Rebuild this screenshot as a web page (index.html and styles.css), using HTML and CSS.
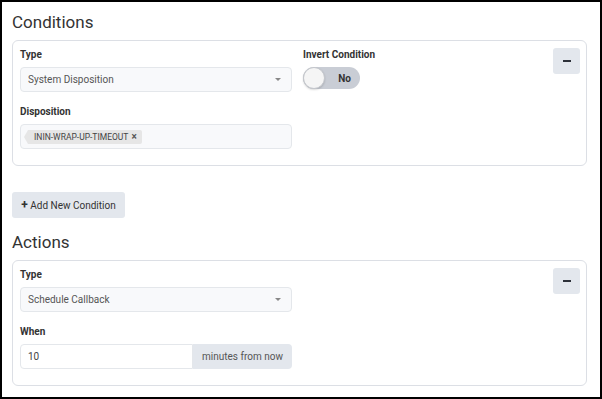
FILE: index.html
```html
<!DOCTYPE html>
<html lang="en">
<head>
    <meta charset="UTF-8">
    <meta name="viewport" content="width=device-width, initial-scale=1.0">
    <title>Conditions and Actions</title>
    <link rel="stylesheet" href="styles.css">
</head>
<body>
    <div class="frame">
        <h2 class="section-title">Conditions</h2>
        <div class="card">
            <div class="card-grid">
                <div class="col-main">
                    <div class="form-group">
                        <label class="field-label">Type</label>
                        <div class="select">
                            <span>System Disposition</span>
                            <span class="caret"></span>
                        </div>
                    </div>
                    <div class="form-group">
                        <label class="field-label">Disposition</label>
                        <div class="tag-input">
                            <span class="tag">ININ-WRAP-UP-TIMEOUT <b class="tag-x">&times;</b></span>
                        </div>
                    </div>
                </div>
                <div class="col-side">
                    <label class="field-label">Invert Condition</label>
                    <div class="toggle">
                        <span class="knob"></span>
                        <span class="toggle-text">No</span>
                    </div>
                </div>
                <button class="btn-remove"><span class="minus"></span></button>
            </div>
        </div>

        <button class="btn-add"><b>+</b> Add New Condition</button>

        <h2 class="section-title">Actions</h2>
        <div class="card">
            <div class="card-grid">
                <div class="col-main">
                    <div class="form-group">
                        <label class="field-label">Type</label>
                        <div class="select">
                            <span>Schedule Callback</span>
                            <span class="caret"></span>
                        </div>
                    </div>
                    <div class="form-group">
                        <label class="field-label">When</label>
                        <div class="input-group">
                            <div class="input">10</div>
                            <div class="addon">minutes from now</div>
                        </div>
                    </div>
                </div>
                <div class="col-side"></div>
                <button class="btn-remove"><span class="minus"></span></button>
            </div>
        </div>
    </div>
</body>
</html>
```
FILE: styles.css
```css
body {
    margin: 0;
    font-family: Roboto, "Liberation Sans", sans-serif;
    color: #333;
    background: #fff;
}
.frame {
    box-sizing: border-box;
    width: 602px;
    height: 399px;
    border: 2px solid #000;
    padding: 8px 13px 0 10px;
    overflow: hidden;
}
.section-title {
    margin: 0 0 6px;
    font-size: 17px;
    font-weight: 400;
    line-height: 24px;
    color: #333;
}
.card {
    border: 1px solid #dcdfe5;
    border-radius: 6px;
    padding: 6px 6px 16px 7px;
}
.card-grid {
    display: grid;
    grid-template-columns: 272px 1fr auto;
    column-gap: 11px;
    align-items: start;
}
.form-group + .form-group {
    margin-top: 12px;
}
.field-label {
    display: block;
    font-size: 10px;
    font-weight: 700;
    line-height: 16px;
    margin-bottom: 4px;
    color: #333;
}

/* dropdown */
.select {
    box-sizing: border-box;
    height: 25px;
    display: flex;
    align-items: center;
    justify-content: space-between;
    padding: 0 7px;
    background: #f8f9fb;
    border: 1px solid #e4e7eb;
    border-radius: 4px;
    font-size: 10px;
    color: #555;
}
.caret {
    width: 0;
    height: 0;
    border-left: 3px solid transparent;
    border-right: 3px solid transparent;
    border-top: 3px solid #888;
    margin-right: 3px;
}

/* tag box */
.tag-input {
    box-sizing: border-box;
    height: 25px;
    display: flex;
    align-items: center;
    padding: 0 4px;
    background: #f8f9fb;
    border: 1px solid #e4e7eb;
    border-radius: 4px;
}
.tag {
    position: relative;
    height: 14px;
    line-height: 14px;
    padding: 0 5px 0 6px;
    background: #e6e6e6;
    border-radius: 0 2px 2px 0;
    font-size: 8.5px;
    color: #444;
    margin-left: 3px;
}
.tag::before {
    content: "";
    position: absolute;
    left: -4px;
    top: 0;
    border-top: 7px solid transparent;
    border-bottom: 7px solid transparent;
    border-right: 4px solid #e6e6e6;
}
.tag-x {
    font-size: 10px;
    color: #555;
    margin-left: 1px;
}

/* switch */
.toggle {
    box-sizing: border-box;
    width: 57px;
    height: 22px;
    border-radius: 11px;
    background: #c9cdd5;
    display: flex;
    align-items: center;
    justify-content: space-between;
    padding-right: 9px;
}
.knob {
    box-sizing: border-box;
    width: 22px;
    height: 22px;
    border-radius: 50%;
    background: #f5f5f5;
    border: 1px solid #c4c7cc;
    box-shadow: 0 1px 2px rgba(0, 0, 0, 0.15);
}
.toggle-text {
    font-size: 10px;
    font-weight: 700;
    color: #333;
}

/* buttons */
.btn-remove {
    width: 27px;
    height: 26px;
    margin-top: 1px;
    border: none;
    border-radius: 3px;
    background: #e3e7ed;
    display: flex;
    align-items: center;
    justify-content: center;
    padding: 0;
}
.minus {
    width: 8px;
    height: 2px;
    background: #2d3139;
}
.btn-add {
    display: block;
    margin: 26px 0 12px;
    height: 26px;
    width: 113px;
    border: none;
    border-radius: 3px;
    background: #e3e7ed;
    font-family: Roboto, "Liberation Sans", sans-serif;
    font-size: 10px;
    color: #333;
    padding: 0;
}
.btn-add b {
    font-size: 12px;
}

/* input with addon */
.input-group {
    display: flex;
    height: 25px;
    font-size: 10px;
}
.input {
    box-sizing: border-box;
    width: 173px;
    display: flex;
    align-items: center;
    padding: 0 7px;
    background: #fff;
    border: 1px solid #e4e7eb;
    border-radius: 4px 0 0 4px;
    color: #444;
}
.addon {
    flex: 1;
    display: flex;
    align-items: center;
    justify-content: center;
    background: #e3e7ed;
    border-radius: 0 4px 4px 0;
    color: #555;
}
```
